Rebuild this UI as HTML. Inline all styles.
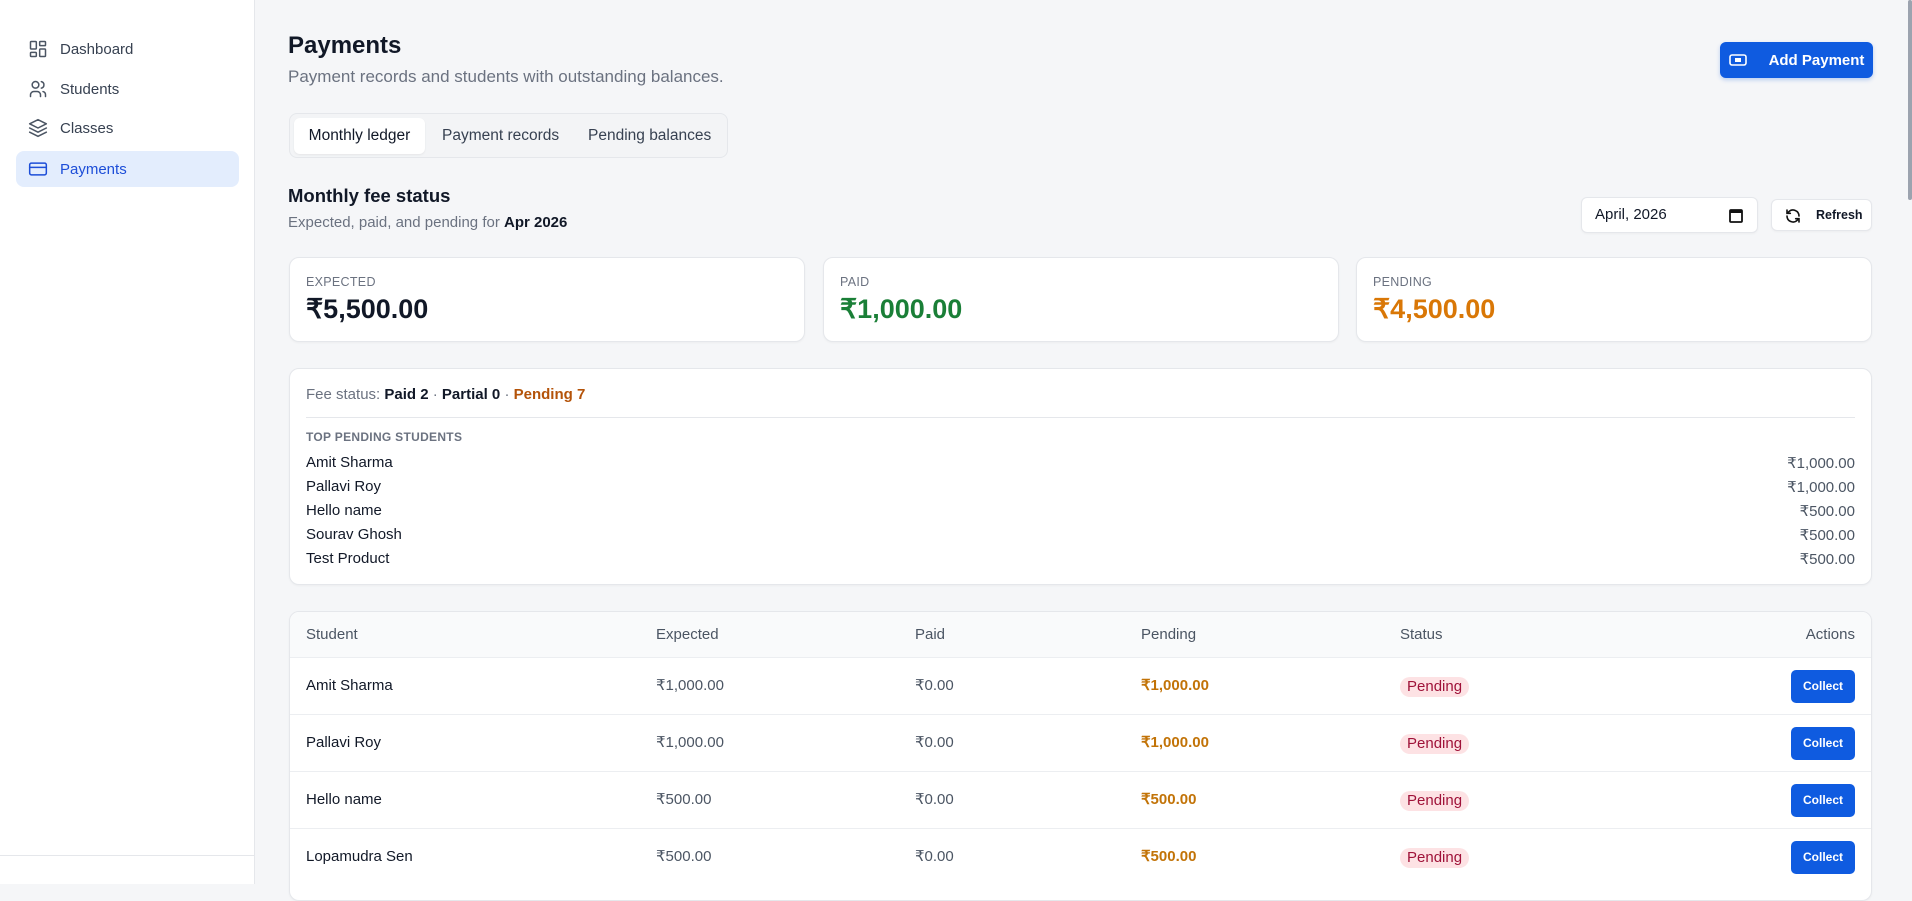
<!DOCTYPE html>
<html><head><meta charset="utf-8"><style>
*{box-sizing:border-box;margin:0;padding:0}
body{width:1912px;height:884px;overflow:hidden;background:#f5f6f8;font-family:"Liberation Sans",sans-serif;color:#111827;position:relative}
.sb{position:absolute;left:0;top:0;width:255px;height:884px;background:#fff;border-right:1px solid #e5e7eb}
.sb .bl{position:absolute;left:0;right:0;top:855px;border-top:1px solid #e5e7eb}
.nav{position:absolute;left:16px;width:223px;height:36px;border-radius:8px;display:flex;align-items:center;padding-left:12px;font-size:15px;color:#374151}
.nav svg{width:20px;height:20px;margin-right:12px;stroke:#4b5563;fill:none;stroke-width:1.8;stroke-linecap:round;stroke-linejoin:round}
.nav.act{background:#e3edfd;color:#1d4ed8}.nav.act svg{stroke:#1d4ed8}
.abs{position:absolute}
h1{position:absolute;left:288px;top:32px;font-size:24px;font-weight:700}
.sub{position:absolute;left:288px;top:67px;font-size:17px;color:#6b7280}
.btn{position:absolute;background:#0f5be0;color:#fff;border-radius:6px;font-weight:700;display:flex;align-items:center;justify-content:center}
.tabs{position:absolute;left:289px;top:113px;width:439px;height:45px;border:1px solid #e5e7eb;border-radius:8px;background:#f3f4f6}
.tab{position:absolute;top:4px;height:36px;line-height:36px;font-size:15.5px;color:#374151}
.tab.a{background:#fff;border-radius:6px;color:#111827;box-shadow:0 1px 2px rgba(0,0,0,.06)}
.card{position:absolute;background:#fff;border:1px solid #e5e7eb;border-radius:10px;box-shadow:0 1px 2px rgba(0,0,0,.04)}
.lbl{font-size:12.5px;color:#6b7280;letter-spacing:.3px;position:absolute;left:16px;top:17px}
.val{font-size:27px;font-weight:700;position:absolute;left:16px;top:36px}
.row{position:absolute;left:16px;right:16px;font-size:15px;display:flex;justify-content:space-between}
.row span:last-child{color:#4b5563}
.th{position:absolute;top:0;height:45px;line-height:45px;font-size:15px;color:#4b5563}
.tr{position:absolute;left:0;right:0;height:57px;border-top:1px solid #eceef1}
.tr div{position:absolute;top:0;line-height:56px;font-size:15px}
.pill{background:#fde2e4;color:#9f1239;font-size:12px;border-radius:10px;padding:2px 7px;line-height:16px!important;top:19px!important}
.col{background:#0f5be0;color:#fff;font-size:12px!important;font-weight:700;border-radius:5px;width:64px;height:33px;line-height:33px!important;text-align:center;top:12px!important;right:16px}
</style></head><body>
<div class="sb"><div class="bl"></div>
<div class="nav" style="top:31px"><svg viewBox="0 0 24 24"><rect x="3" y="3" width="7" height="9" rx="1"/><rect x="14" y="3" width="7" height="5" rx="1"/><rect x="14" y="12" width="7" height="9" rx="1"/><rect x="3" y="16" width="7" height="5" rx="1"/></svg>Dashboard</div>
<div class="nav" style="top:71px"><svg viewBox="0 0 24 24"><circle cx="9" cy="7" r="4"/><path d="M3 21v-2a4 4 0 0 1 4-4h4a4 4 0 0 1 4 4v2M16 3.1a4 4 0 0 1 0 7.8M21 21v-2a4 4 0 0 0-3-3.9"/></svg>Students</div>
<div class="nav" style="top:110px"><svg viewBox="0 0 24 24"><path d="M12 2 2 7l10 5 10-5-10-5zM2 17l10 5 10-5M2 12l10 5 10-5"/></svg>Classes</div>
<div class="nav act" style="top:151px"><svg viewBox="0 0 24 24"><rect x="2" y="5" width="20" height="14" rx="2"/><path d="M2 10h20"/></svg>Payments</div>
</div>
<div class="abs" style="left:1908px;top:0;width:4px;height:200px;background:#9ca3af;border-radius:2px"></div>
<h1>Payments</h1>
<div class="sub">Payment records and students with outstanding balances.</div>
<div class="btn" style="left:1720px;top:42px;width:153px;height:36px;font-size:15px;box-shadow:0 2px 4px rgba(15,91,224,.25)"><svg width="18" height="14" viewBox="0 0 18 14" style="margin-right:22px"><rect x="1" y="2" width="16" height="10" rx="2" fill="none" stroke="#fff" stroke-width="1.6"/><rect x="6" y="5" width="6" height="4" fill="#fff"/></svg>Add Payment</div>
<div class="tabs"><div class="tab a" style="left:4px;width:131px;text-align:center">Monthly ledger</div><div class="tab" style="left:152px">Payment records</div><div class="tab" style="left:298px">Pending balances</div></div>
<div class="abs" style="left:288px;top:185px;font-size:18.5px;font-weight:700">Monthly fee status</div>
<div class="abs" style="left:288px;top:214px;font-size:15px;color:#6b7280">Expected, paid, and pending for <b style="color:#111827">Apr 2026</b></div>
<div class="card" style="left:1581px;top:197px;width:177px;height:36px;border-radius:6px"><span class="abs" style="left:13px;top:8px;font-size:15px">April, 2026</span><svg class="abs" style="left:147px;top:10px" width="14" height="15" viewBox="0 0 14 15"><rect x="1" y="2" width="12" height="12" rx="1" fill="none" stroke="#111" stroke-width="1.8"/><rect x="1" y="2" width="12" height="3" fill="#111"/></svg></div>
<div class="card" style="left:1771px;top:199px;width:101px;height:32px;border-radius:6px"><svg class="abs" style="left:13px;top:8px" width="16" height="16" viewBox="0 0 24 24" fill="none" stroke="#111" stroke-width="2.4" stroke-linecap="round"><path d="M21 12a9 9 0 0 0-15.5-6.2L3 8M3 3v5h5M3 12a9 9 0 0 0 15.5 6.2L21 16M21 21v-5h-5"/></svg><span class="abs" style="left:44px;top:8px;font-size:12.5px;font-weight:700">Refresh</span></div>
<div class="card" style="left:289px;top:257px;width:516px;height:85px"><div class="lbl">EXPECTED</div><div class="val">₹5,500.00</div></div>
<div class="card" style="left:823px;top:257px;width:516px;height:85px"><div class="lbl">PAID</div><div class="val" style="color:#1a7f37">₹1,000.00</div></div>
<div class="card" style="left:1356px;top:257px;width:516px;height:85px"><div class="lbl">PENDING</div><div class="val" style="color:#d97706">₹4,500.00</div></div>
<div class="card" style="left:289px;top:368px;width:1583px;height:217px">
<div class="abs" style="left:16px;top:17px;font-size:15px;color:#6b7280">Fee status: <b style="color:#111827">Paid 2</b> · <b style="color:#111827">Partial 0</b> · <b style="color:#b45309">Pending 7</b></div>
<div class="abs" style="left:16px;right:16px;top:48px;border-top:1px solid #e5e7eb"></div>
<div class="abs" style="left:16px;top:61px;font-size:12px;font-weight:700;color:#6b7280;letter-spacing:.3px">TOP PENDING STUDENTS</div>
<div class="row" style="top:85px"><span>Amit Sharma</span><span>₹1,000.00</span></div>
<div class="row" style="top:109px"><span>Pallavi Roy</span><span>₹1,000.00</span></div>
<div class="row" style="top:133px"><span>Hello name</span><span>₹500.00</span></div>
<div class="row" style="top:157px"><span>Sourav Ghosh</span><span>₹500.00</span></div>
<div class="row" style="top:181px"><span>Test Product</span><span>₹500.00</span></div>
</div>
<div class="card" style="left:289px;top:611px;width:1583px;height:290px;overflow:hidden">
<div class="abs" style="left:0;right:0;top:0;height:45px;background:#f9fafb"></div>
<div class="th" style="left:16px">Student</div><div class="th" style="left:366px">Expected</div><div class="th" style="left:625px">Paid</div><div class="th" style="left:851px">Pending</div><div class="th" style="left:1110px">Status</div><div class="th" style="right:16px">Actions</div>
<div class="tr" style="top:45px"><div style="left:16px">Amit Sharma</div><div style="left:366px;color:#4b5563">₹1,000.00</div><div style="left:625px;color:#4b5563">₹0.00</div><div style="left:851px;color:#c27307;font-weight:700">₹1,000.00</div><div class="pill" style="left:1110px">Pending</div><div class="col">Collect</div></div>
<div class="tr" style="top:102px"><div style="left:16px">Pallavi Roy</div><div style="left:366px;color:#4b5563">₹1,000.00</div><div style="left:625px;color:#4b5563">₹0.00</div><div style="left:851px;color:#c27307;font-weight:700">₹1,000.00</div><div class="pill" style="left:1110px">Pending</div><div class="col">Collect</div></div>
<div class="tr" style="top:159px"><div style="left:16px">Hello name</div><div style="left:366px;color:#4b5563">₹500.00</div><div style="left:625px;color:#4b5563">₹0.00</div><div style="left:851px;color:#c27307;font-weight:700">₹500.00</div><div class="pill" style="left:1110px">Pending</div><div class="col">Collect</div></div>
<div class="tr" style="top:216px"><div style="left:16px">Lopamudra Sen</div><div style="left:366px;color:#4b5563">₹500.00</div><div style="left:625px;color:#4b5563">₹0.00</div><div style="left:851px;color:#c27307;font-weight:700">₹500.00</div><div class="pill" style="left:1110px">Pending</div><div class="col">Collect</div></div>
</div>
</body></html>
